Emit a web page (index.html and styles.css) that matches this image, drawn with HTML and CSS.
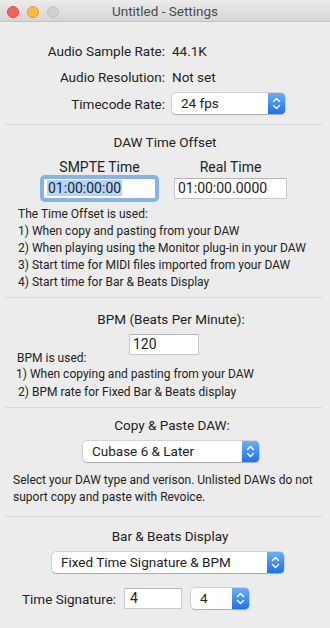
FILE: index.html
```html
<!DOCTYPE html>
<html>
<head>
<meta charset="utf-8">
<link rel="stylesheet" href="styles.css">
</head>
<body>
<div class="window">
  <header class="titlebar">
    <div class="lights">
      <span class="light red"></span><span class="light yellow"></span><span class="light gray"></span>
    </div>
    <div class="title">Untitled - Settings</div>
    <div></div>
  </header>

  <section class="sec info">
    <div class="kv">
      <span class="k">Audio Sample Rate:</span><span class="v">44.1K</span>
      <span class="k">Audio Resolution:</span><span class="v">Not set</span>
      <span class="k">Timecode Rate:</span>
      <div class="popup w-tc">
        <span class="popup-text">24 fps</span>
        <span class="stepper"><svg width="17" height="21" viewBox="0 0 17 21"><path d="M5.5 8.5 L8.5 5.5 L11.5 8.5 M5.5 12.5 L8.5 15.5 L11.5 12.5" fill="none" stroke="#fff" stroke-width="1.5" stroke-linecap="round" stroke-linejoin="round"/></svg></span>
      </div>
    </div>
  </section>
  <div class="sep"></div>

  <section class="sec offset">
    <h2 class="head">DAW Time Offset</h2>
    <div class="cols">
      <div class="col">
        <div class="col-label">SMPTE Time</div>
        <div class="field focus"><span class="sel">01:00:00:00</span></div>
      </div>
      <div class="col">
        <div class="col-label">Real Time</div>
        <div class="field">01:00:00.0000</div>
      </div>
    </div>
    <div class="para p-offset">
      <div>The Time Offset is used:</div>
      <div>1) When copy and pasting from your DAW</div>
      <div>2) When playing using the Monitor plug-in in your DAW</div>
      <div>3) Start time for MIDI files imported from your DAW</div>
      <div>4) Start time for Bar &amp; Beats Display</div>
    </div>
  </section>
  <div class="sep"></div>

  <section class="sec bpm">
    <h2 class="head head-bpm">BPM (Beats Per Minute):</h2>
    <div class="bpm-row">
      <span class="bpm-label">BPM is used:</span>
      <div class="field bpm-field">120</div>
    </div>
    <div class="para p-bpm">
      <div class="l1">1) When copying and pasting from your DAW</div>
      <div class="l2">2) BPM rate for Fixed Bar &amp; Beats display</div>
    </div>
  </section>
  <div class="sep"></div>

  <section class="sec daw">
    <h2 class="head head-daw">Copy &amp; Paste DAW:</h2>
    <div class="popup w-daw">
      <span class="popup-text">Cubase 6 &amp; Later</span>
      <span class="stepper"><svg width="17" height="21" viewBox="0 0 17 21"><path d="M5.5 8.5 L8.5 5.5 L11.5 8.5 M5.5 12.5 L8.5 15.5 L11.5 12.5" fill="none" stroke="#fff" stroke-width="1.5" stroke-linecap="round" stroke-linejoin="round"/></svg></span>
    </div>
    <div class="para p-daw">
      <div>Select your DAW type and verison. Unlisted DAWs do not</div>
      <div>suport copy and paste with Revoice.</div>
    </div>
  </section>
  <div class="sep"></div>

  <section class="sec bars">
    <h2 class="head head-bars">Bar &amp; Beats Display</h2>
    <div class="popup w-bars">
      <span class="popup-text">Fixed Time Signature &amp; BPM</span>
      <span class="stepper"><svg width="17" height="21" viewBox="0 0 17 21"><path d="M5.5 8.5 L8.5 5.5 L11.5 8.5 M5.5 12.5 L8.5 15.5 L11.5 12.5" fill="none" stroke="#fff" stroke-width="1.5" stroke-linecap="round" stroke-linejoin="round"/></svg></span>
    </div>
    <div class="ts-row">
      <span class="ts-label">Time Signature:</span>
      <div class="field ts-field">4</div>
      <div class="popup w-ts">
        <span class="popup-text">4</span>
        <span class="stepper"><svg width="17" height="21" viewBox="0 0 17 21"><path d="M5.5 8.5 L8.5 5.5 L11.5 8.5 M5.5 12.5 L8.5 15.5 L11.5 12.5" fill="none" stroke="#fff" stroke-width="1.5" stroke-linecap="round" stroke-linejoin="round"/></svg></span>
      </div>
    </div>
  </section>
</div>
</body>
</html>
```

FILE: styles.css
```css
* { box-sizing: border-box; }
html, body { margin: 0; padding: 0; }
body {
  width: 330px;
  height: 628px;
  overflow: hidden;
  background: #ececec;
  font-family: "Roboto", "Liberation Sans", sans-serif;
  font-size: 13.5px;
  color: #232323;
}
.window {
  width: 330px;
  height: 628px;
  background: #ececec;
}
.titlebar {
  height: 22px;
  display: grid;
  grid-template-columns: 1fr auto 1fr;
  align-items: center;
  background: linear-gradient(#ebebeb, #d6d6d6);
  border-bottom: 1px solid #c2c2c2;
}
.lights {
  display: flex;
  gap: 8px;
  padding-left: 7px;
  padding-top: 1px;
}
.light {
  width: 12px;
  height: 12px;
  border-radius: 50%;
}
.red { background: #fc605c; border: 0.5px solid #e1453f; }
.yellow { background: #fdbc40; border: 0.5px solid #df9e26; }
.gray { background: #d0d0d0; border: 0.5px solid #c0c0c0; }
.title {
  font-size: 13.5px;
  color: #4a4a4a;
  line-height: 22px;
}
.sep {
  height: 1px;
  background: #d8d8d8;
  margin: 0 8px 0 5px;
}
.sec { display: flex; flex-direction: column; }
.info { padding: 19px 0 10px; }
.kv {
  display: grid;
  grid-template-columns: 165px auto;
  grid-template-rows: 20px 20px 21px;
  row-gap: 6px;
  column-gap: 7px;
  align-items: center;
}
.k { text-align: right; line-height: 20px; }
.v { line-height: 20px; }

.popup {
  height: 21px;
  display: flex;
  align-items: stretch;
  background: #fff;
  border-radius: 4px;
  box-shadow: 0 0 0 0.5px rgba(0,0,0,0.22), 0 1px 1px rgba(0,0,0,0.18);
  overflow: hidden;
}
.popup-text {
  flex: 1;
  line-height: 21px;
  padding-left: 9px;
  white-space: nowrap;
}
.stepper {
  width: 17px;
  display: flex;
  background: linear-gradient(#6aaefc, #1c70f2);
}
.w-tc { width: 113px; }

.head {
  margin: 0;
  font-size: 13.5px;
  font-weight: normal;
  line-height: 18px;
  text-align: center;
}
.offset { padding: 8px 0 6px; }
.cols {
  display: flex;
  gap: 18px;
  padding-left: 43px;
  margin-top: 7px;
}
.col { width: 113px; display: flex; flex-direction: column; align-items: center; }
.col-label { font-size: 14px; line-height: 18px; }
.field {
  width: 100%;
  height: 21px;
  margin-top: 2px;
  background: #fff;
  border: 1px solid #c9c9c9;
  border-top-color: #b5b5b5;
  padding-left: 3px;
  line-height: 19px;
  font-size: 14px;
  white-space: nowrap;
}
.focus {
  box-shadow: 0 0 0 3px #86b3ea;
  border-color: #86b3ea;
  border-radius: 2px;
}
.sel { background: #b4d5fb; padding: 0 1px; }
.para { line-height: 17px; font-size: 12px; white-space: nowrap; }
.p-offset { margin-top: 7px; padding-left: 18px; }

.bpm { padding: 12px 0 6px; }
.head-bpm { padding-left: 12px; }
.bpm-row {
  display: grid;
  grid-template-columns: 112px 70px;
  align-items: end;
  padding-left: 17px;
  margin-top: 6px;
}
.bpm-label { font-size: 12px; line-height: 17px; margin-bottom: -12px; }
.bpm-field { margin-top: 0; padding-left: 3px; }
.p-bpm { margin-top: 11px; line-height: 17.5px; }
.p-bpm .l1 { padding-left: 16px; }
.p-bpm .l2 { padding-left: 18px; }

.daw { padding: 8px 0 10px; align-items: flex-start; }
.daw .head { align-self: stretch; }
.head-daw { padding-left: 14px; }
.w-daw { width: 176px; margin: 7px 0 0 83px; }
.p-daw { margin-top: 10px; padding-left: 13px; }

.bars { padding: 10px 0 0; align-items: flex-start; }
.bars .head { align-self: stretch; }
.head-bars { padding-left: 10px; }
.w-bars { width: 232px; margin: 7px 0 0 52px; }
.ts-row {
  display: flex;
  align-items: center;
  margin-top: 15px;
  padding-left: 22px;
}
.ts-label { width: 102px; }
.ts-field { width: 58px; margin-top: 0; padding-left: 5px; }
.w-ts { width: 58px; margin-left: 9px; }
.w-ts .popup-text { padding-left: 9px; }
```
